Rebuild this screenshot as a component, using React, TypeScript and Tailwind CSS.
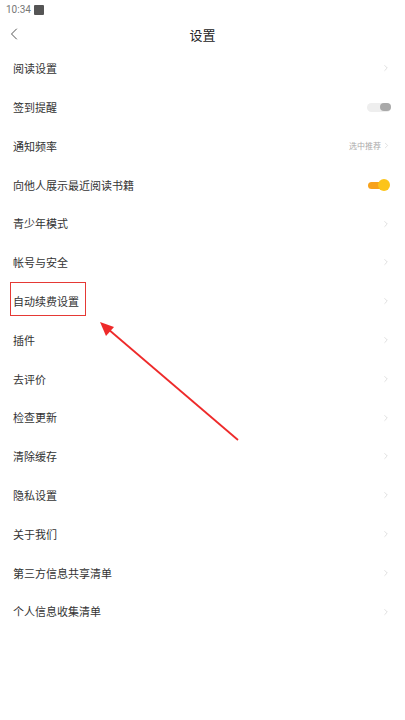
import { ChevronRight, ChevronLeft } from 'lucide-react';

type Row = {
  label: string;
  kind?: 'chevron' | 'off' | 'on' | 'value';
  value?: string;
  boxed?: boolean;
};

const rows: Row[] = [
  { label: '阅读设置' },
  { label: '签到提醒', kind: 'off' },
  { label: '通知频率', kind: 'value', value: '选中推荐' },
  { label: '向他人展示最近阅读书籍', kind: 'on' },
  { label: '青少年模式' },
  { label: '帐号与安全' },
  { label: '自动续费设置', boxed: true },
  { label: '插件' },
  { label: '去评价' },
  { label: '检查更新' },
  { label: '清除缓存' },
  { label: '隐私设置' },
  { label: '关于我们' },
  { label: '第三方信息共享清单' },
  { label: '个人信息收集清单' },
];

function Toggle({ on }: { on: boolean }) {
  if (on) {
    return (
      <div className="relative w-[22px] h-[12px] mr-[1px]">
        <div className="absolute left-0 top-[3px] w-[16px] h-[7px] rounded-full bg-[#f7a21b]" />
        <div className="absolute right-0 top-0 w-[12px] h-[12px] rounded-full bg-[#fcc419]" />
      </div>
    );
  }
  return (
    <div className="flex items-center w-[24px] h-[9px] rounded-full bg-[#eeeeee] justify-end">
      <div className="w-[11px] h-[8px] rounded-full bg-[#a9a9a9]" />
    </div>
  );
}

export default function App() {
  return (
    <div
      className="relative w-[405px] h-[720px] bg-white overflow-hidden"
      style={{ fontFamily: '"Noto Sans CJK SC", "Noto Sans", sans-serif' }}
    >
      {/* 状态栏 */}
      <div className="h-[20px] flex items-center pl-[6px] gap-[3px]">
        <span className="text-[10px] leading-none text-[#777]" style={{ fontFamily: 'Roboto, sans-serif' }}>10:34</span>
        <div className="w-[10px] h-[10px] bg-[#555] rounded-[1px]" />
      </div>

      {/* 标题栏 */}
      <div className="relative h-[29px] flex items-center justify-center">
        <ChevronLeft className="absolute left-[4px] top-[4px] text-[#444]" size={20} strokeWidth={1.1} />
        <span className="text-[13px] text-[#222]">设置</span>
      </div>

      {/* 设置列表 */}
      <div className="flex flex-col">
        {rows.map((r) => (
          <div key={r.label} className="relative h-[38.8px] flex items-center justify-between pl-[13px] pr-[14px]">
            <span className="text-[11px] text-[#333]">{r.label}</span>
            {r.boxed && (
              <div className="absolute left-[10px] top-[0px] w-[76px] h-[34px] border-[1.5px] border-[#e53935]" />
            )}
            {r.kind === 'off' && <Toggle on={false} />}
            {r.kind === 'on' && <Toggle on />}
            {r.kind === 'value' && (
              <div className="flex items-center gap-[1px]">
                <span className="text-[8px] text-[#aaa]">{r.value}</span>
                <ChevronRight className="text-[#ccc]" size={9} strokeWidth={1.5} />
              </div>
            )}
            {(!r.kind || r.kind === 'chevron') && (
              <ChevronRight className="text-[#ccc]" size={10} strokeWidth={1.5} />
            )}
          </div>
        ))}
      </div>

      {/* 注释箭头 */}
      <svg className="absolute inset-0 pointer-events-none" width="405" height="720">
        <line x1="238" y1="440" x2="108" y2="329" stroke="#ee2a2a" strokeWidth="1.8" />
        <polygon points="100,322 114,327 106,336" fill="#ee2a2a" />
      </svg>
    </div>
  );
}
